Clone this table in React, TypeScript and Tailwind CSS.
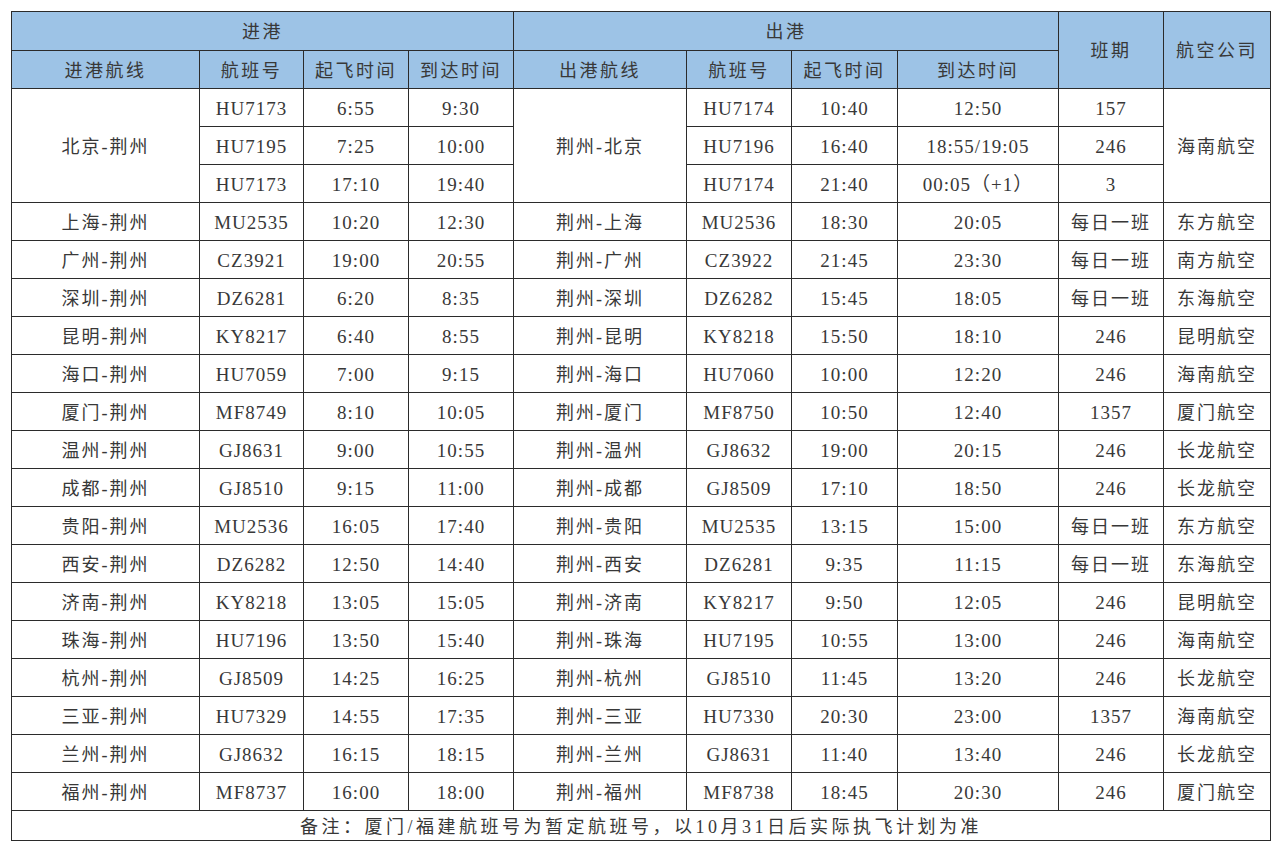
const rows = [
  ["上海-荆州", "MU2535", "10:20", "12:30", "荆州-上海", "MU2536", "18:30", "20:05", "每日一班", "东方航空"],
  ["广州-荆州", "CZ3921", "19:00", "20:55", "荆州-广州", "CZ3922", "21:45", "23:30", "每日一班", "南方航空"],
  ["深圳-荆州", "DZ6281", "6:20", "8:35", "荆州-深圳", "DZ6282", "15:45", "18:05", "每日一班", "东海航空"],
  ["昆明-荆州", "KY8217", "6:40", "8:55", "荆州-昆明", "KY8218", "15:50", "18:10", "246", "昆明航空"],
  ["海口-荆州", "HU7059", "7:00", "9:15", "荆州-海口", "HU7060", "10:00", "12:20", "246", "海南航空"],
  ["厦门-荆州", "MF8749", "8:10", "10:05", "荆州-厦门", "MF8750", "10:50", "12:40", "1357", "厦门航空"],
  ["温州-荆州", "GJ8631", "9:00", "10:55", "荆州-温州", "GJ8632", "19:00", "20:15", "246", "长龙航空"],
  ["成都-荆州", "GJ8510", "9:15", "11:00", "荆州-成都", "GJ8509", "17:10", "18:50", "246", "长龙航空"],
  ["贵阳-荆州", "MU2536", "16:05", "17:40", "荆州-贵阳", "MU2535", "13:15", "15:00", "每日一班", "东方航空"],
  ["西安-荆州", "DZ6282", "12:50", "14:40", "荆州-西安", "DZ6281", "9:35", "11:15", "每日一班", "东海航空"],
  ["济南-荆州", "KY8218", "13:05", "15:05", "荆州-济南", "KY8217", "9:50", "12:05", "246", "昆明航空"],
  ["珠海-荆州", "HU7196", "13:50", "15:40", "荆州-珠海", "HU7195", "10:55", "13:00", "246", "海南航空"],
  ["杭州-荆州", "GJ8509", "14:25", "16:25", "荆州-杭州", "GJ8510", "11:45", "13:20", "246", "长龙航空"],
  ["三亚-荆州", "HU7329", "14:55", "17:35", "荆州-三亚", "HU7330", "20:30", "23:00", "1357", "海南航空"],
  ["兰州-荆州", "GJ8632", "16:15", "18:15", "荆州-兰州", "GJ8631", "11:40", "13:40", "246", "长龙航空"],
  ["福州-荆州", "MF8737", "16:00", "18:00", "荆州-福州", "MF8738", "18:45", "20:30", "246", "厦门航空"],
];

const beijing = [
  ["HU7173", "6:55", "9:30", "HU7174", "10:40", "12:50", "157"],
  ["HU7195", "7:25", "10:00", "HU7196", "16:40", "18:55/19:05", "246"],
  ["HU7173", "17:10", "19:40", "HU7174", "21:40", "00:05（+1）", "3"],
];

// cjk columns get wider tracking than the digit columns
const cell = "border-[1.5px] border-[#2b2b2b] p-0 pt-[3px] h-[38px] text-center align-middle";
const cjk = cell + " text-[18px] tracking-[2px]";
const num = cell + " text-[19px] tracking-[1px]";
const head = "border-[1.5px] border-[#2b2b2b] p-0 pt-[3px] text-center align-middle bg-[#9dc3e6] text-[18px] tracking-[2.5px] font-normal";

export default function App() {
  return (
    <div
      className="w-[1280px] h-[852px] bg-white pt-[11px] pl-[11px] text-[#383838]"
      style={{ fontFamily: '"Liberation Serif", "Noto Sans CJK SC", serif' }}
    >
      <table className="w-[1259px] table-fixed border-collapse">
        <colgroup>
          <col className="w-[188px]" />
          <col className="w-[104px]" />
          <col className="w-[105px]" />
          <col className="w-[105px]" />
          <col className="w-[173px]" />
          <col className="w-[105px]" />
          <col className="w-[106px]" />
          <col className="w-[161px]" />
          <col className="w-[105px]" />
          <col className="w-[107px]" />
        </colgroup>
        <thead>
          <tr>
            <th colSpan={4} className={head + " h-[39px]"}>进港</th>
            <th colSpan={4} className={head + " h-[39px]"}>出港</th>
            <th rowSpan={2} className={head}>班期</th>
            <th rowSpan={2} className={head}>航空公司</th>
          </tr>
          <tr>
            <th className={head + " h-[38px]"}>进港航线</th>
            <th className={head}>航班号</th>
            <th className={head}>起飞时间</th>
            <th className={head}>到达时间</th>
            <th className={head}>出港航线</th>
            <th className={head}>航班号</th>
            <th className={head}>起飞时间</th>
            <th className={head}>到达时间</th>
          </tr>
        </thead>
        <tbody>
          {beijing.map((b, i) => (
            <tr key={"bj" + i}>
              {i === 0 && <td rowSpan={3} className={cjk}>北京-荆州</td>}
              <td className={num}>{b[0]}</td>
              <td className={num}>{b[1]}</td>
              <td className={num}>{b[2]}</td>
              {i === 0 && <td rowSpan={3} className={cjk}>荆州-北京</td>}
              <td className={num}>{b[3]}</td>
              <td className={num}>{b[4]}</td>
              <td className={num}>{b[5]}</td>
              <td className={num}>{b[6]}</td>
              {i === 0 && <td rowSpan={3} className={cjk}>海南航空</td>}
            </tr>
          ))}
          {rows.map((r) => (
            <tr key={r[0]}>
              <td className={cjk}>{r[0]}</td>
              <td className={num}>{r[1]}</td>
              <td className={num}>{r[2]}</td>
              <td className={num}>{r[3]}</td>
              <td className={cjk}>{r[4]}</td>
              <td className={num}>{r[5]}</td>
              <td className={num}>{r[6]}</td>
              <td className={num}>{r[7]}</td>
              <td className={/[0-9]/.test(r[8]) ? num : cjk}>{r[8]}</td>
              <td className={cjk}>{r[9]}</td>
            </tr>
          ))}
          <tr>
            <td colSpan={10} className="border-[1.5px] border-[#2b2b2b] p-0 pt-[2px] h-[30px] text-center align-middle text-[18px] tracking-[3.5px] leading-none">
              备注：厦门/福建航班号为暂定航班号，以10月31日后实际执飞计划为准
            </td>
          </tr>
        </tbody>
      </table>
    </div>
  );
}
